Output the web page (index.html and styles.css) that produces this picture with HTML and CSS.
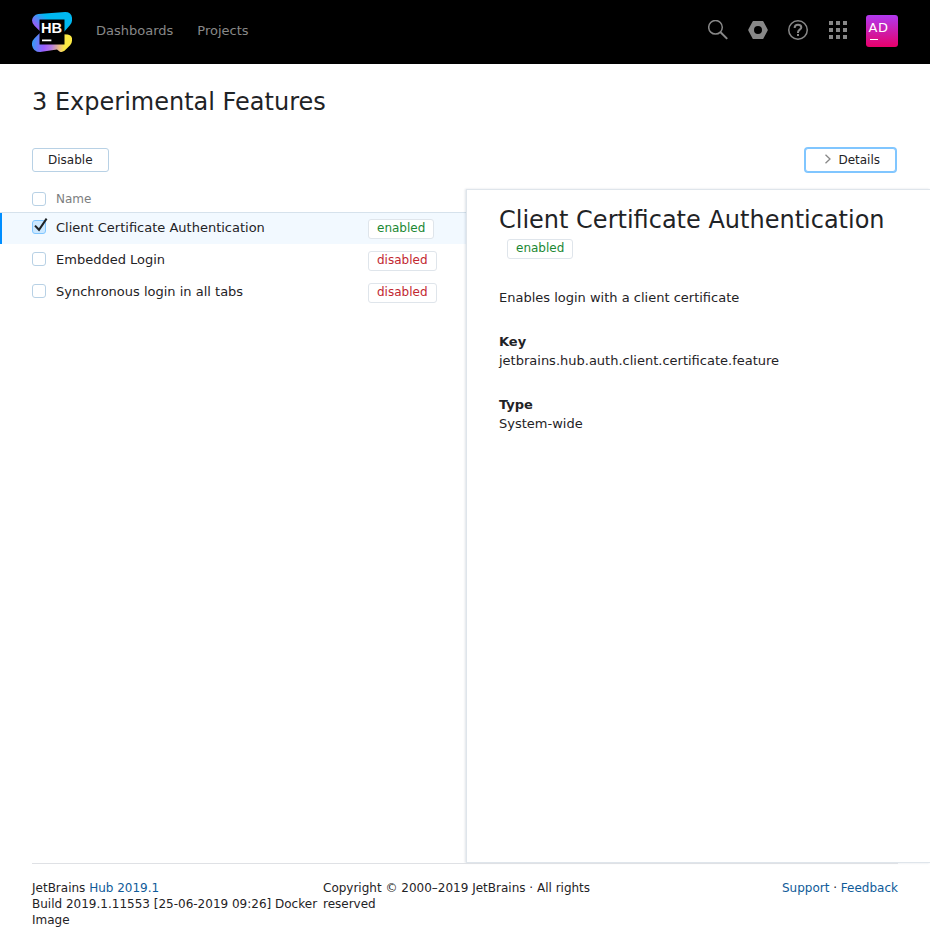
FILE: index.html
```html
<!DOCTYPE html>
<html lang="en">
<head>
<meta charset="utf-8">
<title>Experimental Features</title>
<link rel="stylesheet" href="styles.css">
</head>
<body>
<header class="header">
  <svg class="logo" width="40" height="40" viewBox="0 0 64 64">
    <defs>
      <linearGradient id="top" gradientUnits="userSpaceOnUse" x1="4" y1="36" x2="27" y2="11"><stop offset="0" stop-color="#9757f5"/><stop offset=".35" stop-color="#9261f7"/><stop offset="1" stop-color="#00b8f1"/></linearGradient>
      <linearGradient id="bottom" gradientUnits="userSpaceOnUse" x1="0" y1="44" x2="64" y2="52"><stop offset="0" stop-color="#2f9df5"/><stop offset=".12" stop-color="#5b84f7"/><stop offset=".32" stop-color="#9c5cff"/><stop offset=".5" stop-color="#b57de0"/><stop offset=".72" stop-color="#f0c578"/><stop offset=".82" stop-color="#fbe943"/></linearGradient>
    </defs>
    <path fill="url(#bottom)" d="M12 34L4 42Q0 46 0 50V53Q2 64 13 64L40 60L44 63Q48 65 52 62L61 53Q64 50 64 46V42Q63 37 57 36Z"/>
    <path fill="url(#top)" d="M10 3L53 0Q63 0 64 9V14Q64 18 60 22L50 33L14 32L4 22Q0 18 0 13Q1 5 10 3Z"/>
    <path d="M12 12h40v40H12z"/>
    <path fill="#fff" d="M16 44h15v2.8H16z"/>
    <text class="logo-text" x="14.4" y="33.8">HB</text>
  </svg>
  <nav class="nav"><a>Dashboards</a><a>Projects</a></nav>
  <div class="tools">
    <svg width="20" height="20" viewBox="0 0 20 20" fill="none" stroke="#888" stroke-width="1.5"><circle cx="7.5" cy="7.3" r="6.8"/><path d="M12.3 12L19.2 18.9" stroke-width="2"/></svg>
    <svg width="20" height="20" viewBox="0 0 20 20"><path fill="#888" fill-rule="evenodd" d="M5.2 1h9.6Q15.1 1 15.4 1.5L19.7 9.5V10.5L15.4 18.5Q15.1 19 14.8 19H5.2Q4.9 19 4.6 18.5L.3 10.5V9.5L4.6 1.5Q4.9 1 5.2 1ZM10 6a4 4 0 1 0 0 8a4 4 0 1 0 0-8Z"/></svg>
    <svg width="20" height="20" viewBox="0 0 20 20" fill="none" stroke="#888"><circle cx="10" cy="10" r="9.25" stroke-width="1.5"/><path stroke-width="2" d="M6.7 7.9V7.5C6.7 5.7 8.1 4.7 10 4.7S13.3 5.7 13.3 7.4C13.3 9.5 10 9.8 10 12.2V13M10 14V16"/></svg>
    <svg width="20" height="20" viewBox="0 0 20 20" fill="#888"><path d="M1 1h4v4H1zM8 1h4v4H8zM15 1h4v4h-4zM1 8h4v4H1zM8 8h4v4H8zM15 8h4v4h-4zM1 15h4v4H1zM8 15h4v4H8zM15 15h4v4h-4z"/></svg>
    <span class="avatar">AD<i class="avatar-line"></i></span>
  </div>
</header>
<main class="main">
  <h1 class="title">3 Experimental Features</h1>
  <div class="toolbar">
    <button class="button">Disable</button>
    <button class="button button-active"><svg width="8" height="10" viewBox="0 0 8 10" fill="none" stroke="#888" stroke-width="1.3"><path d="M1.5 .7L6 5L1.5 9.3"/></svg>Details</button>
  </div>
  <div class="content">
    <section class="list">
      <div class="row row-head"><span class="check"></span><span class="name">Name</span></div>
      <div class="row row-selected"><span class="check check-on"><svg class="tick" width="16" height="16" viewBox="0 0 16 16" fill="none" stroke="#1f2326" stroke-width="2"><path d="M3 8.6L7 12.8L14.6 1.6"/></svg></span><span class="name">Client Certificate Authentication</span><span class="tag tag-on">enabled</span></div>
      <div class="row"><span class="check"></span><span class="name">Embedded Login</span><span class="tag tag-off">disabled</span></div>
      <div class="row"><span class="check"></span><span class="name">Synchronous login in all tabs</span><span class="tag tag-off">disabled</span></div>
    </section>
    <aside class="panel">
      <h2 class="panel-title">Client Certificate Authentication</h2>
      <span class="tag tag-on panel-tag">enabled</span>
      <p class="description">Enables login with a client certificate</p>
      <dl class="details">
        <div><dt>Key</dt><dd>jetbrains.hub.auth.client.certificate.feature</dd></div>
        <div><dt>Type</dt><dd>System-wide</dd></div>
      </dl>
    </aside>
  </div>
</main>
<footer class="footer">
  <div>JetBrains <a class="link">Hub 2019.1</a><br>Build 2019.1.11553 [25-06-2019 09:26] Docker Image</div>
  <div>Copyright © 2000–2019 JetBrains · All rights reserved</div>
  <div class="footer-right"><a class="link">Support</a> · <a class="link">Feedback</a></div>
</footer>
</body>
</html>
```
FILE: styles.css
```css
* { box-sizing: border-box; }
body {
  margin: 0;
  height: 944px;
  display: flex;
  flex-direction: column;
  overflow: hidden;
  background: #fff;
  color: #1f2326;
  font: 13px/20px "DejaVu Sans", sans-serif;
}
h1, h2, p, dl, dd { margin: 0; font-weight: 400; }
.header {
  height: 64px;
  flex: none;
  display: flex;
  align-items: center;
  padding: 0 32px;
  background: #000;
  color: #888;
}
.logo-text { font: bold 23.5px "Liberation Sans", sans-serif; fill: #fff; }
.nav { display: flex; gap: 24px; margin: 0 auto 2px 24px; }
.tools { display: flex; align-items: center; gap: 20px; padding-bottom: 4px; }
.avatar {
  position: relative;
  width: 32px;
  height: 32px;
  margin: 2px 0 0 -2px;
  padding: 3px 0 0 2.5px;
  border-radius: 3px;
  background: linear-gradient(#b139f0, #e8006a);
  color: #fff;
  font-size: 13px;
  letter-spacing: .6px;
}
.avatar-line { position: absolute; left: 4px; top: 24px; width: 8px; height: 1px; background: #fff; }
.main { flex: 1; display: flex; flex-direction: column; }
.title { padding: 24px 32px 0; font-size: 24px; line-height: 28px; }
.toolbar { display: flex; justify-content: space-between; margin: 32px 34px 0 32px; }
.button {
  height: 24px;
  padding: 0 15px;
  border: 1px solid #b8d1e5;
  border-radius: 3px;
  background: #fff;
  color: #1f2326;
  font: 12px/20px "DejaVu Sans", sans-serif;
}
.button-active { padding-left: 18px; border-color: #80c6ff; box-shadow: 0 0 0 1px #80c6ff; }
.button-active svg { margin-right: 6px; }
.content { flex: 1; display: flex; margin-top: 16px; }
.list { width: 466px; }
.row { height: 32px; display: flex; align-items: flex-start; padding: 6px 0 0 32px; }
.row-head { height: 25px; padding-top: 1px; border-bottom: 1px solid #d6e2ec; color: #7c7e80; font-size: 12px; }
.row-selected { height: 31px; padding: 5px 0 0 30px; border-left: 2px solid #008eff; background: #f2f9ff; }
.check {
  position: relative;
  width: 14px;
  height: 14px;
  margin: 2px 10px 0 0;
  border: 1px solid #b8d1e5;
  border-radius: 3px;
  background: #fff;
}
.row-head .check { margin-top: 3px; }
.check-on { border-color: #80c6ff; background: #cce8ff; }
.tick { position: absolute; left: -1px; top: -4px; }
.name { width: 312px; }
.tag {
  height: 20px;
  margin-top: 1px;
  padding: 0 8px;
  border: 1px solid #dfe5eb;
  border-radius: 3px;
  background: #fff;
  font-size: 12px;
  line-height: 17px;
}
.tag-on { color: #1b8833; }
.tag-off { color: #c22731; }
.panel {
  width: 464px;
  margin: 1px 0 0;
  padding: 16px 0 0 32px;
  border: 1px solid #dfe5eb;
  border-right: 0;
  background: #fff;
  box-shadow: -1px 0 2px rgba(0, 42, 76, .13);
}
.panel-title { font-size: 24px; line-height: 28px; white-space: nowrap; }
.panel-tag { display: block; width: 66px; margin: 5px 0 0 8px; }
.description { margin-top: 29px; }
.details { margin-top: 24px; line-height: 19px; }
.details div { margin-bottom: 25px; }
.details dt { font-weight: 700; }
.footer {
  height: 81px;
  flex: none;
  display: grid;
  grid-template-columns: 291px 291px 1fr;
  margin: 0 32px;
  padding-top: 16px;
  border-top: 1px solid #dfe1e5;
  font-size: 12px;
  line-height: 16px;
}
.footer-right { text-align: right; }
.link { color: #0f5b99; }
```
